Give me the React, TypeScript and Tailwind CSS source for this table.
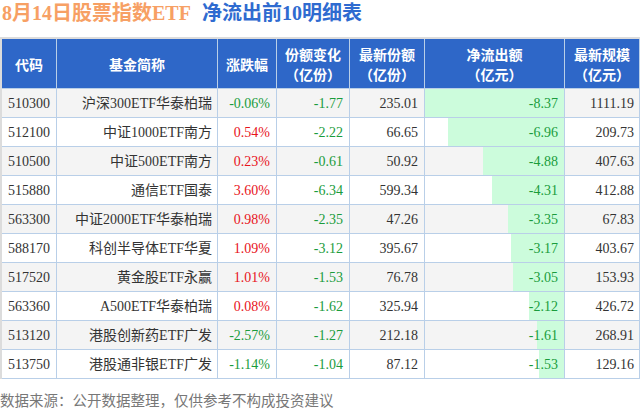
import React from "react";

type Row = {
  code: string;
  name: string;
  pct: string;
  chg: string;
  share: string;
  flow: number;
  scale: string;
};

const rows: Row[] = [
  { code: "510300", name: "沪深300ETF华泰柏瑞", pct: "-0.06%", chg: "-1.77", share: "235.01", flow: -8.37, scale: "1111.19" },
  { code: "512100", name: "中证1000ETF南方", pct: "0.54%", chg: "-2.22", share: "66.65", flow: -6.96, scale: "209.73" },
  { code: "510500", name: "中证500ETF南方", pct: "0.23%", chg: "-0.61", share: "50.92", flow: -4.88, scale: "407.63" },
  { code: "515880", name: "通信ETF国泰", pct: "3.60%", chg: "-6.34", share: "599.34", flow: -4.31, scale: "412.88" },
  { code: "563300", name: "中证2000ETF华泰柏瑞", pct: "0.98%", chg: "-2.35", share: "47.26", flow: -3.35, scale: "67.83" },
  { code: "588170", name: "科创半导体ETF华夏", pct: "1.09%", chg: "-3.12", share: "395.67", flow: -3.17, scale: "403.67" },
  { code: "517520", name: "黄金股ETF永赢", pct: "1.01%", chg: "-1.53", share: "76.78", flow: -3.05, scale: "153.93" },
  { code: "563360", name: "A500ETF华泰柏瑞", pct: "0.08%", chg: "-1.62", share: "325.94", flow: -2.12, scale: "426.72" },
  { code: "513120", name: "港股创新药ETF广发", pct: "-2.57%", chg: "-1.27", share: "212.18", flow: -1.61, scale: "268.91" },
  { code: "513750", name: "港股通非银ETF广发", pct: "-1.14%", chg: "-1.04", share: "87.12", flow: -1.53, scale: "129.16" },
];

const maxFlow = 8.37;
const font = { fontFamily: '"Liberation Serif", "Noto Sans CJK SC", serif' };

export default function App() {
  return (
    <div className="w-[640px] h-[410px] bg-white overflow-hidden" style={font}>
      <div className="h-[37px] flex items-start text-[20px] leading-[26px] font-bold whitespace-nowrap">
        <span className="ml-[2px] text-[#f7a064]">8月14日股票指数ETF</span>
        <span className="ml-[11px] text-[#2f6bd0]">净流出前10明细表</span>
      </div>
      <div className="border-t-2 border-l-2 border-[#dcdcdc]">
        <div
          className="grid grid-cols-[55px_161px_59px_73px_75px_140px_75px] text-[14px] text-[#333333]"
        >
          {[
            ["代码"],
            ["基金简称"],
            ["涨跌幅"],
            ["份额变化", "（亿份）"],
            ["最新份额", "（亿份）"],
            ["净流出额", "（亿元）"],
            ["最新规模", "（亿元）"],
          ].map((h, i) => (
            <div
              key={i}
              className="h-[50px] bg-[#2e67c8] border-r border-b border-[#b9cfe8] flex flex-col items-center justify-center text-white font-bold leading-[20px]"
              style={{ fontFamily: '"Noto Sans CJK SC", sans-serif' }}
            >
              {h.map((t, j) => (
                <span key={j}>{t}</span>
              ))}
            </div>
          ))}
          {rows.map((r, idx) => {
            const bg = idx % 2 === 0 ? "bg-[#f4f4f4]" : "bg-white";
            const cell = `h-[29px] border-r border-b border-[#b9cfe8] flex items-center ${bg}`;
            const pctColor = r.pct.startsWith("-") ? "text-[#1a9c3c]" : "text-[#e8141c]";
            return (
              <React.Fragment key={r.code}>
                <div className={`${cell} justify-center`}>{r.code}</div>
                <div className={`${cell} justify-end pr-[5px]`}>{r.name}</div>
                <div className={`${cell} justify-end pr-[6px] ${pctColor}`}>{r.pct}</div>
                <div className={`${cell} justify-end pr-[6px] text-[#1a9c3c]`}>{r.chg}</div>
                <div className={`${cell} justify-end pr-[6px]`}>{r.share}</div>
                <div className={`${cell} justify-end relative`}>
                  <div
                    className="absolute right-0 top-0 bottom-0 bg-[#ccfcdc]"
                    style={{ width: `${(Math.abs(r.flow) / maxFlow) * 100}%` }}
                  />
                  <span className="relative pr-[6px] text-[#1a9c3c]">{r.flow.toFixed(2)}</span>
                </div>
                <div className={`${cell} justify-end pr-[5px]`}>{r.scale}</div>
              </React.Fragment>
            );
          })}
        </div>
      </div>
      <div
        className="mt-[11px] text-[14.5px] leading-[20px] text-[#777777] whitespace-nowrap"
        style={{ fontFamily: '"Noto Sans CJK SC", sans-serif' }}
      >
        数据来源：公开数据整理，仅供参考不构成投资建议
      </div>
    </div>
  );
}
